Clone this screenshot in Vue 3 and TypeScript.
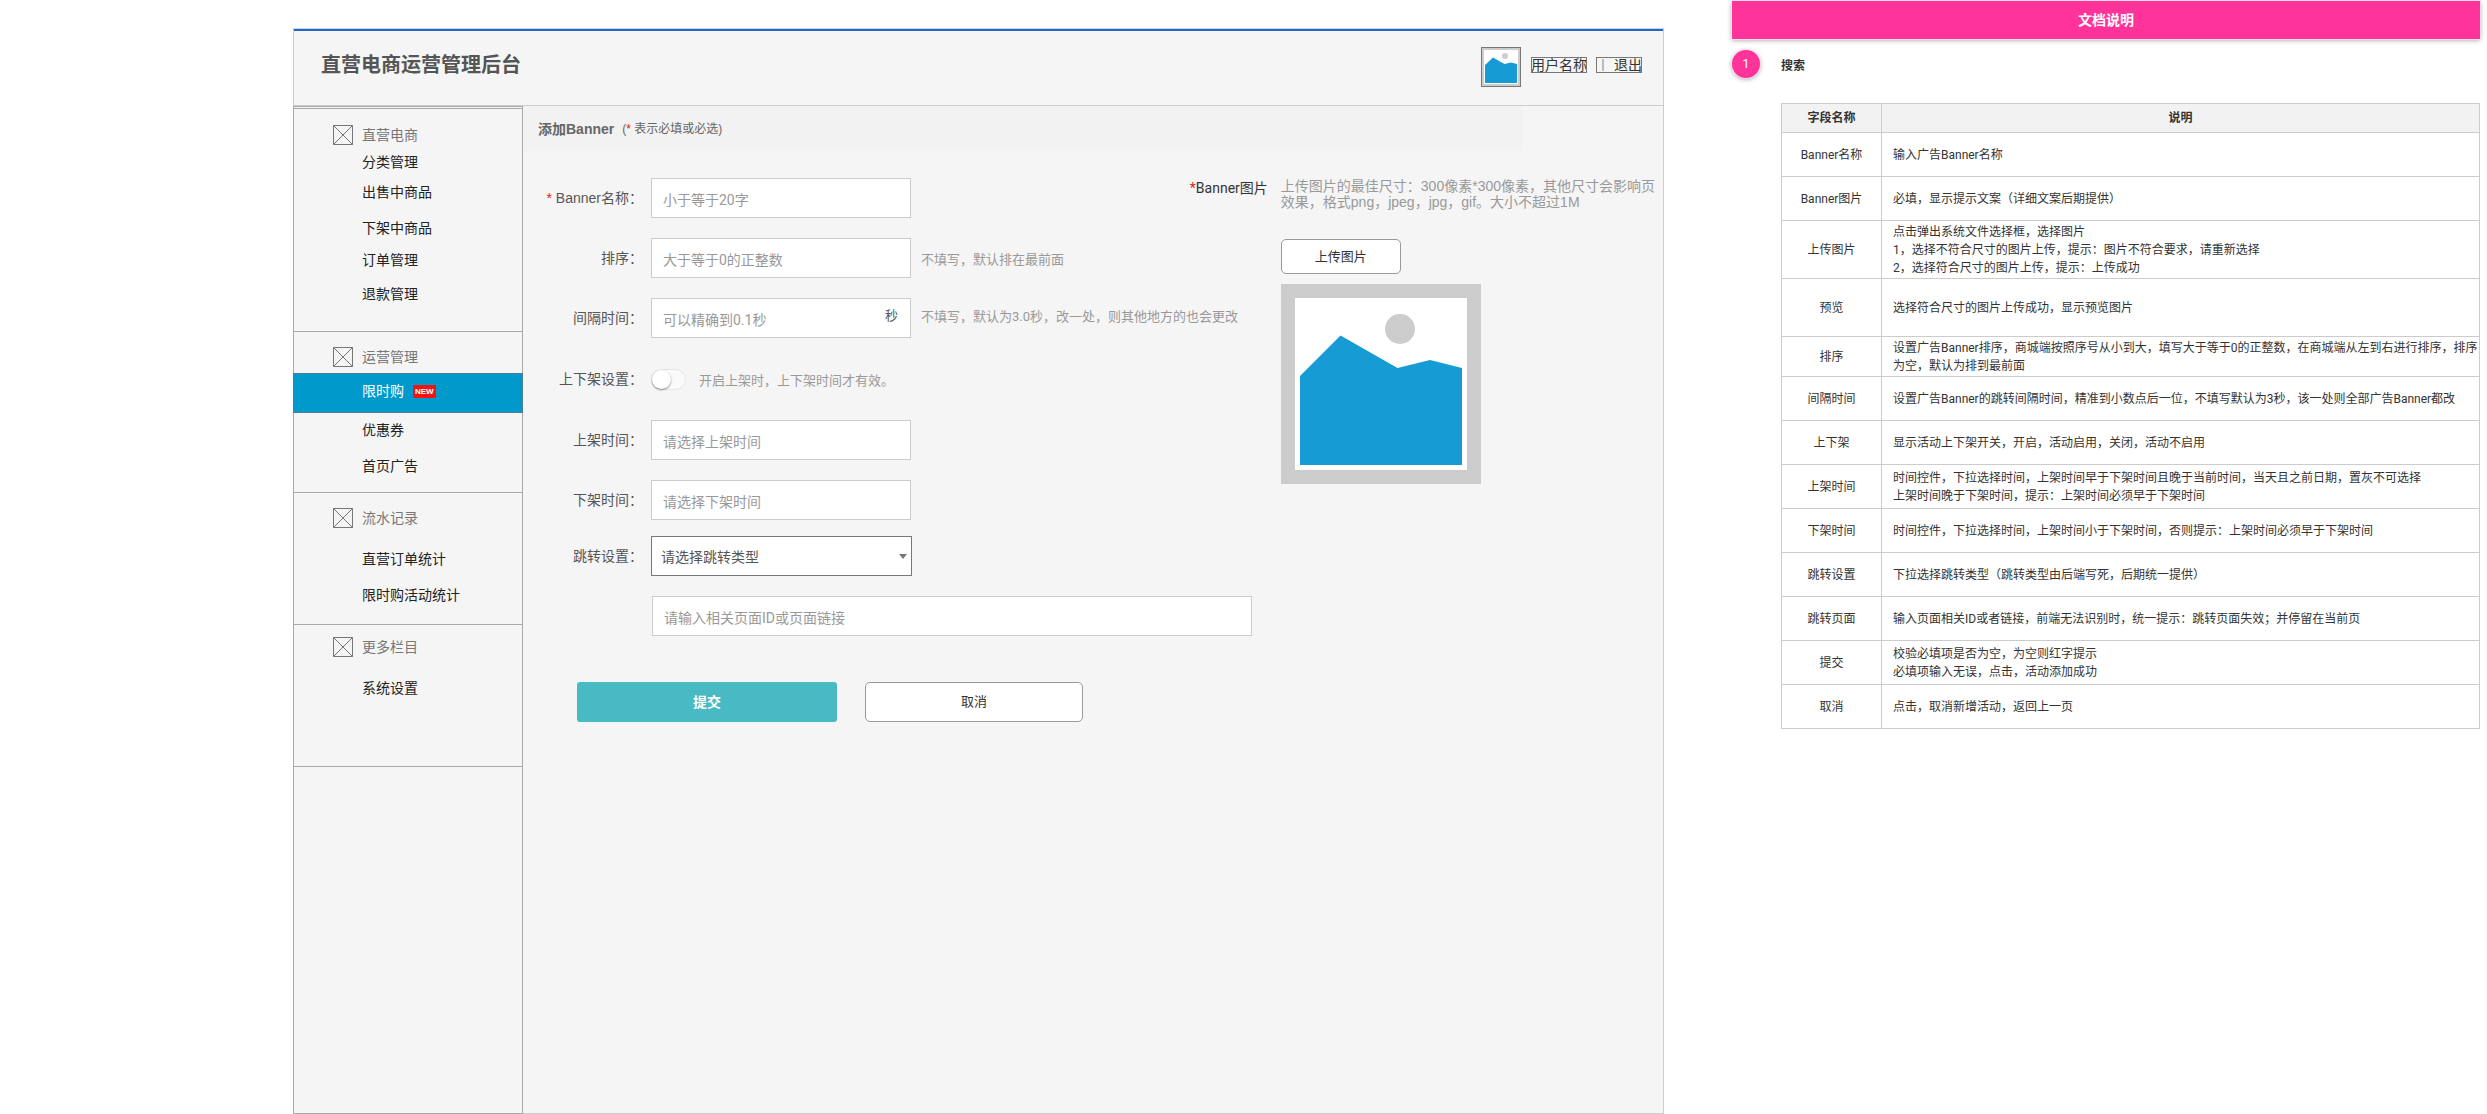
<script setup lang="ts">
import { ref } from 'vue'

interface MenuItem {
  text: string
  gap: 'g6' | 'g10' | 'g12' | 'g14' | 'g16' | 'g18' | 'g24'
  isNew?: boolean
}

interface MenuSection {
  key: string
  title: string
  items: MenuItem[]
}

interface DocRow {
  name: string
  lines: string[]
  size: 'normal' | 'tall' | 'short'
}

const menu: MenuSection[] = [
  {
    key: 'shop',
    title: '直营电商',
    items: [
      { text: '分类管理', gap: 'g10' },
      { text: '出售中商品', gap: 'g12' },
      { text: '下架中商品', gap: 'g18' },
      { text: '订单管理', gap: 'g14' },
      { text: '退款管理', gap: 'g16' },
    ],
  },
  {
    key: 'operate',
    title: '运营管理',
    items: [
      { text: '限时购', gap: 'g6', isNew: true },
      { text: '优惠券', gap: 'g10' },
      { text: '首页广告', gap: 'g18' },
    ],
  },
  {
    key: 'records',
    title: '流水记录',
    items: [
      { text: '直营订单统计', gap: 'g24' },
      { text: '限时购活动统计', gap: 'g18' },
    ],
  },
  {
    key: 'more',
    title: '更多栏目',
    items: [{ text: '系统设置', gap: 'g24' }],
  },
]

const docRows: DocRow[] = [
  { name: 'Banner名称', lines: ['输入广告Banner名称'], size: 'normal' },
  { name: 'Banner图片', lines: ['必填，显示提示文案（详细文案后期提供）'], size: 'normal' },
  {
    name: '上传图片',
    lines: [
      '点击弹出系统文件选择框，选择图片',
      '1，选择不符合尺寸的图片上传，提示：图片不符合要求，请重新选择',
      '2，选择符合尺寸的图片上传，提示：上传成功',
    ],
    size: 'tall',
  },
  { name: '预览', lines: ['选择符合尺寸的图片上传成功，显示预览图片'], size: 'tall' },
  {
    name: '排序',
    lines: [
      '设置广告Banner排序，商城端按照序号从小到大，填写大于等于0的正整数，在商城端从左到右进行排序，排序',
      '为空，默认为排到最前面',
    ],
    size: 'short',
  },
  {
    name: '间隔时间',
    lines: ['设置广告Banner的跳转间隔时间，精准到小数点后一位，不填写默认为3秒，该一处则全部广告Banner都改'],
    size: 'normal',
  },
  { name: '上下架', lines: ['显示活动上下架开关，开启，活动启用，关闭，活动不启用'], size: 'normal' },
  {
    name: '上架时间',
    lines: [
      '时间控件，下拉选择时间，上架时间早于下架时间且晚于当前时间，当天且之前日期，置灰不可选择',
      '上架时间晚于下架时间，提示：上架时间必须早于下架时间',
    ],
    size: 'normal',
  },
  {
    name: '下架时间',
    lines: ['时间控件，下拉选择时间，上架时间小于下架时间，否则提示：上架时间必须早于下架时间'],
    size: 'normal',
  },
  { name: '跳转设置', lines: ['下拉选择跳转类型（跳转类型由后端写死，后期统一提供）'], size: 'normal' },
  {
    name: '跳转页面',
    lines: ['输入页面相关ID或者链接，前端无法识别时，统一提示：跳转页面失效；并停留在当前页'],
    size: 'normal',
  },
  { name: '提交', lines: ['校验必填项是否为空，为空则红字提示', '必填项输入无误，点击，活动添加成功'], size: 'normal' },
  { name: '取消', lines: ['点击，取消新增活动，返回上一页'], size: 'normal' },
]

const bannerName = ref('')
const sortOrder = ref('')
const interval = ref('')
const scheduled = ref(false)
const startTime = ref('')
const endTime = ref('')
const jumpType = ref('')
const jumpTarget = ref('')
</script>

<template>
  <div class="page">
    <div class="frame">
      <header class="top">
        <h1 class="title">直营电商运营管理后台</h1>
        <div class="account">
          <svg class="avatar" viewBox="0 0 40 40" aria-hidden="true">
            <rect x="0.5" y="0.5" width="39" height="39" fill="#ccc" stroke="#777" />
            <rect x="3" y="3" width="34" height="34" fill="#fff" />
            <circle cx="24" cy="9" r="3" fill="#ccc" />
            <path d="M4 18 12 10.5 23.5 17 30 15.5 36 17V36H4Z" fill="#169bd5" />
          </svg>
          <a class="user" href="#">用户名称</a>
          <a class="logout" href="#"><span class="bar"></span>退出</a>
        </div>
      </header>

      <div class="body">
        <nav class="side">
          <section v-for="section in menu" :key="section.key" class="section" :class="section.key">
            <h2 class="section-title">
              <svg class="box-icon" viewBox="0 0 20 20" aria-hidden="true">
                <path d="M.5.5h19v19H.5ZM.5.5l19 19M19.5.5l-19 19" fill="none" stroke="#777" />
              </svg>
              {{ section.title }}
            </h2>
            <a
              v-for="item in section.items"
              :key="item.text"
              href="#"
              class="item"
              :class="[item.gap, { active: item.isNew }]"
            >
              {{ item.text }}<span v-if="item.isNew" class="new">NEW</span>
            </a>
          </section>
        </nav>

        <main class="main">
          <div class="crumb">
            <strong>添加Banner</strong>
            <span class="legend">(<i class="star">*</i> 表示必填或必选)</span>
          </div>

          <div class="columns">
            <form class="form" @submit.prevent>
              <div class="field">
                <label for="name"><i class="star">*</i> Banner名称：</label>
                <input id="name" v-model="bannerName" class="text" type="text" placeholder="小于等于20字" />
              </div>
              <div class="field">
                <label for="sort">排序：</label>
                <input id="sort" v-model="sortOrder" class="text" type="text" placeholder="大于等于0的正整数" />
                <span class="hint">不填写，默认排在最前面</span>
              </div>
              <div class="field">
                <label for="interval">间隔时间：</label>
                <div class="with-unit">
                  <input id="interval" v-model="interval" class="text" type="text" placeholder="可以精确到0.1秒" />
                  <span class="unit">秒</span>
                </div>
                <span class="hint raised">不填写，默认为3.0秒，改一处，则其他地方的也会更改</span>
              </div>
              <div class="field switch-field">
                <label for="scheduled">上下架设置：</label>
                <input id="scheduled" v-model="scheduled" class="switch" type="checkbox" />
                <span class="hint">开启上架时，上下架时间才有效。</span>
              </div>
              <div class="field">
                <label for="start">上架时间：</label>
                <input id="start" v-model="startTime" class="text" type="text" placeholder="请选择上架时间" />
              </div>
              <div class="field">
                <label for="end">下架时间：</label>
                <input id="end" v-model="endTime" class="text" type="text" placeholder="请选择下架时间" />
              </div>
              <div class="field select-field">
                <label for="jump">跳转设置：</label>
                <div class="with-unit">
                  <select id="jump" v-model="jumpType" class="select">
                    <option value="">请选择跳转类型</option>
                  </select>
                  <svg class="caret" viewBox="0 0 8 5" aria-hidden="true"><path d="M0 0h8L4 5Z" fill="#777" /></svg>
                </div>
              </div>
              <div class="field no-label">
                <input
                  v-model="jumpTarget"
                  class="text wide"
                  type="text"
                  aria-label="跳转页面"
                  placeholder="请输入相关页面ID或页面链接"
                />
              </div>
              <div class="actions">
                <button class="submit" type="submit">提交</button>
                <button class="cancel" type="button">取消</button>
              </div>
            </form>

            <section class="upload">
              <p class="upload-label"><i class="star">*</i>Banner图片</p>
              <div class="upload-body">
                <p class="upload-tip">
                  上传图片的最佳尺寸：300像素*300像素，其他尺寸会影响页<br />效果，格式png，jpeg，jpg，gif。大小不超过1M
                </p>
                <button class="upload-btn" type="button">上传图片</button>
                <svg class="preview" viewBox="0 0 200 200" aria-hidden="true">
                  <rect width="200" height="200" fill="#ccc" />
                  <rect x="14" y="14" width="172" height="172" fill="#fff" />
                  <circle cx="119" cy="45" r="15" fill="#ccc" />
                  <path d="M19 92 59.5 51.5 116.5 84 149 76 181 84V181H19Z" fill="#169bd5" />
                </svg>
              </div>
            </section>
          </div>
        </main>
      </div>
    </div>

    <aside class="doc">
      <h2 class="doc-title">文档说明</h2>
      <div class="doc-head">
        <span class="num">1</span>
        <strong>搜索</strong>
      </div>
      <table class="doc-table">
        <thead>
          <tr>
            <th scope="col" class="name">字段名称</th>
            <th scope="col">说明</th>
          </tr>
        </thead>
        <tbody>
          <tr v-for="row in docRows" :key="row.name" :class="row.size">
            <td class="name">{{ row.name }}</td>
            <td class="desc">
              <div v-for="line in row.lines" :key="line">{{ line }}</div>
            </td>
          </tr>
        </tbody>
      </table>
    </aside>
  </div>
</template>

<style>
body {
  margin: 0;
  background: #fff;
}
</style>

<style scoped>
* {
  box-sizing: border-box;
}

h1,
h2,
p {
  margin: 0;
}

.page,
.page input,
.page select,
.page button {
  font-family: Roboto, "Noto Sans CJK SC", sans-serif;
}

.page {
  display: grid;
  grid-template-columns: minmax(0, 1371fr) minmax(0, 748fr);
  column-gap: 68px;
  padding: 0 7px 0 293px;
  font-size: 14px;
  color: #333;
}

a {
  color: inherit;
  text-decoration: none;
}

.star {
  font-style: normal;
  color: #e02020;
}

.frame {
  display: flex;
  flex-direction: column;
  min-height: calc(100vh - 28px);
  margin-top: 28px;
  border: 1px solid #ccc;
  border-top: 1px solid #b3dcff;
  background: #f5f5f5;
}

.top {
  display: flex;
  justify-content: space-between;
  height: 77px;
  border-top: 2px solid #2a62bc;
  border-bottom: 1px solid #ccc;
  padding: 0 21px 0 27px;
}

.title {
  margin-top: 19px;
  font-size: 20px;
  line-height: 30px;
  color: #555;
}

.account {
  display: flex;
  align-items: flex-start;
  padding-top: 16px;
}

.avatar {
  width: 40px;
  height: 40px;
  margin-right: 10px;
}

.user,
.logout {
  display: flex;
  align-items: center;
  height: 16px;
  margin-top: 10px;
  line-height: 16px;
  outline: 1px solid #777;
  outline-offset: -1px;
}

.logout {
  margin-left: 9px;
  padding-left: 6px;
}

.bar {
  width: 2px;
  height: 12px;
  margin-right: 10px;
  background: #bbb;
}

.body {
  display: flex;
  flex: 1;
}

.side {
  flex: none;
  width: 230px;
  margin: 0 0 -1px -1px;
  border: 1px solid #aaa;
  border-top: 3px double #aaa;
}

.section {
  padding: 15px 0;
  border-bottom: 1px solid #aaa;
}

.section.shop {
  padding: 16px 0 26px;
}

.section.records {
  padding-bottom: 18px;
}

.section.more {
  padding: 12px 0 67px;
}

.section-title {
  display: flex;
  align-items: center;
  gap: 9px;
  padding-left: 39px;
  font-size: 14px;
  font-weight: 400;
  line-height: 20px;
  color: #777;
}

.box-icon {
  width: 20px;
  height: 20px;
}

.item {
  display: flex;
  align-items: center;
  height: 18px;
  padding: 0 0 3px 68px;
  line-height: 15px;
  color: #222;
}

.g6 {
  margin-top: 6px;
}

.g10 {
  margin-top: 10px;
}

.g12 {
  margin-top: 12px;
}

.g14 {
  margin-top: 14px;
}

.g16 {
  margin-top: 16px;
}

.g18 {
  margin-top: 18px;
}

.g24 {
  margin-top: 24px;
}

.item.active {
  height: 40px;
  margin-left: -1px;
  margin-right: -1px;
  border: 1px solid #4d7f93;
  background: #09c;
  color: #fff;
}

.new {
  margin-left: 9px;
  padding: 0 2px;
  background: #f01414;
  font: bold 8px/13px "Liberation Sans", sans-serif;
}

.main {
  flex: 1;
  min-width: 0;
}

.crumb {
  display: flex;
  align-items: center;
  gap: 8px;
  height: 45px;
  max-width: 1000px;
  padding: 0 15px 2px;
  background: #f2f2f2;
  font-family: "Liberation Sans", "Noto Sans CJK SC", sans-serif;
  color: #666;
}

.legend {
  font-size: 12px;
}

.columns {
  display: flex;
  justify-content: space-between;
  padding-top: 27px;
}

.form {
  flex: 1;
  min-width: 0;
}

.field {
  display: flex;
  align-items: center;
  height: 40px;
  margin-bottom: 20px;
}

.field > * {
  flex: none;
}

.field label {
  width: 120px;
  margin-right: 8px;
  padding-bottom: 3px;
  text-align: right;
  font-family: "Liberation Sans", "Noto Sans CJK SC", sans-serif;
  color: #555;
}

.text {
  width: 260px;
  height: 40px;
  padding: 3px 11px 0;
  border: 1px solid #ccc;
  border-radius: 0;
  background: #fff;
  font-size: 14px;
  color: #333;
}

.text.wide {
  width: 600px;
}

.text::placeholder {
  color: #999;
}

.with-unit {
  position: relative;
}

.unit {
  position: absolute;
  top: 8px;
  right: 13px;
  font-size: 13px;
  line-height: 20px;
  color: #555;
}

.hint {
  margin-left: 10px;
  font-size: 13px;
  white-space: nowrap;
  color: #999;
}

.hint.raised {
  padding-bottom: 6px;
}

.switch-field {
  height: 42px;
}

.switch {
  appearance: none;
  width: 35px;
  height: 21px;
  margin: 0 3px 0 0;
  border-radius: 11px;
  background: #fafafa;
  box-shadow: inset 0 0 0 1px #e6e6e6;
}

.switch::before {
  content: "";
  display: block;
  width: 19px;
  height: 19px;
  margin: 1px;
  border-radius: 50%;
  background: #fff;
  box-shadow: 0 1px 2px rgba(0, 0, 0, 0.45);
}

.switch:checked {
  background: #48bac3;
}

.switch:checked::before {
  margin-left: 15px;
}

.select-field {
  margin-top: -4px;
}

.select {
  appearance: none;
  display: block;
  width: 261px;
  height: 40px;
  padding: 2px 24px 0 9px;
  border: 1px solid #777;
  border-radius: 0;
  background: #fff;
  font-size: 14px;
  color: #555;
}

.caret {
  position: absolute;
  top: 18px;
  right: 5px;
  width: 8px;
  height: 5px;
  pointer-events: none;
}

.no-label {
  padding-left: 129px;
}

.actions {
  display: flex;
  gap: 28px;
  padding: 26px 0 0 54px;
}

.submit,
.cancel,
.upload-btn {
  flex: none;
  padding: 0 0 3px;
  border: 1px solid #999;
  border-radius: 5px;
  background: #fff;
  font-size: 13px;
  color: #333;
}

.submit {
  width: 260px;
  height: 40px;
  border: 0;
  border-radius: 3px;
  background: #48bac3;
  font-size: 14px;
  font-weight: 700;
  color: #fff;
}

.cancel {
  width: 218px;
  height: 40px;
}

.upload {
  display: flex;
  flex: none;
  gap: 13px;
  margin-right: 8px;
}

.upload-label {
  line-height: 20px;
}

.upload-body {
  display: flex;
  flex-direction: column;
  align-items: flex-start;
}

.upload-tip {
  font-family: "Liberation Sans", "Noto Sans CJK SC", sans-serif;
  line-height: 16px;
  color: #999;
  margin-bottom: 29px;
  white-space: nowrap;
}

.upload-btn {
  width: 120px;
  height: 35px;
  margin-bottom: 10px;
}

.preview {
  width: 200px;
  height: 200px;
}

.doc-title {
  margin-top: 1px;
  background: #f39;
  box-shadow: 0 0 0 1px #f7dfeb, 0 1px 5px rgba(0, 0, 0, 0.4);
  font-size: 14px;
  line-height: 38px;
  text-align: center;
  color: #fff;
}

.doc-head {
  display: flex;
  align-items: center;
  gap: 21px;
  margin: 11px 0 25px;
  font-size: 12px;
}

.num {
  width: 28px;
  border-radius: 50%;
  background: #f39;
  box-shadow: 0 0 0 1px #f7dfeb, 0 1px 5px rgba(0, 0, 0, 0.4);
  font-size: 13px;
  line-height: 28px;
  text-align: center;
  color: #fff;
}

.doc-table {
  width: calc(100% - 49px);
  margin-left: 49px;
  border-collapse: collapse;
  table-layout: fixed;
  font-size: 12px;
  line-height: 18px;
}

.doc-table th,
.doc-table td {
  height: 44px;
  padding: 0;
  border: 1px solid #ccc;
}

.doc-table th {
  height: 29px;
  background: #f2f2f2;
}

.doc-table .tall td {
  height: 58px;
}

.doc-table .short td {
  height: 40px;
}

.doc-table .name {
  width: 100px;
  text-align: center;
}

.doc-table .desc {
  padding-left: 11px;
}
</style>
